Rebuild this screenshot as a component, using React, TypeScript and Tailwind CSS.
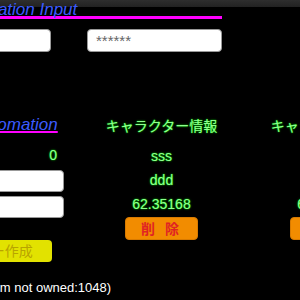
import React from 'react';

const glow = 'text-[#90ff90] [text-shadow:0_0_2px_#00b000,0_0_1px_#00e000]';

const characters = [
  { name: 'sss', sub: 'ddd', value: '62.35168' },
  { name: 'sss', sub: 'ddd', value: '62.35168' },
];

const CharacterCard: React.FC<{ name: string; sub: string; value: string }> = ({ name, sub, value }) => (
  <div className="w-[165px] shrink-0 flex flex-col items-center">
    <div className={`text-[14px] leading-[20px] whitespace-nowrap ${glow}`}>キャラクター情報</div>
    <div className={`mt-[8px] text-[14px] leading-[24px] ${glow}`}>{name}</div>
    <div className={`text-[14px] leading-[24px] ${glow}`}>{sub}</div>
    <div className={`text-[14px] leading-[24px] ${glow}`}>{value}</div>
    <button className="mt-[1px] w-[73px] h-[23px] rounded-[4px] bg-[#f28c00] border border-[#d87a00] text-[#e02424] text-[14px] font-bold tracking-[3px] leading-none">
      削 除
    </button>
  </div>
);

export default function App() {
  return (
    <div
      className="w-[300px] h-[300px] overflow-hidden bg-[linear-gradient(to_bottom,#2e2e2e_0px,#222222_7px,#000000_7px)] text-white"
      style={{ fontFamily: '"Liberation Sans", Arial, "Noto Sans CJK JP", sans-serif' }}
    >
      {/* input section */}
      <div className="-ml-[124px] w-[346px]">
        <h2 className="mt-[4px] text-[17px] leading-[12px] italic text-[#3b5bff] whitespace-nowrap border-b-[3px] border-[#ff00ff]">
          Character Infomation Input
        </h2>
        <div className="mt-[10px] flex justify-end gap-[36px]">
          <input className="w-[135px] h-[23px] rounded-[4px] bg-white border border-[#999] px-2 text-[15px] text-black" />
          <input
            className="w-[135px] h-[23px] rounded-[4px] bg-white border border-[#999] px-2 text-[15px] text-black placeholder:text-[#666]"
            placeholder="******"
          />
        </div>
      </div>

      {/* character list */}
      <div className="mt-[64px] flex">
        <div className="-ml-[101px] w-[180px] shrink-0 flex flex-col">
          <h2 className="text-[17px] leading-[17px] italic text-[#3b5bff] whitespace-nowrap underline decoration-[#ff00ff] decoration-[1.5px] underline-offset-[1px]">
            Character Infomation
          </h2>
          <div className={`mt-[12px] pr-[22px] text-right text-[14px] leading-[20px] ${glow}`}>0</div>
          <input className="mt-[5px] self-end mr-[15px] w-[150px] h-[22px] rounded-[4px] bg-white border border-[#999]" />
          <input className="mt-[4px] self-end mr-[15px] w-[150px] h-[22px] rounded-[4px] bg-white border border-[#999]" />
          <button className="mt-[22px] self-end mr-[27px] w-[150px] h-[22px] rounded-[4px] bg-[#e2e200] text-[#b8a400] text-[14px] leading-none whitespace-nowrap">
            キャラクター作成
          </button>
        </div>
        {characters.map((c, i) => (
          <CharacterCard key={i} {...c} />
        ))}
      </div>

      <div className="mt-[16px] -ml-[19px] text-[13px] leading-[20px] whitespace-nowrap">
        (Item not owned:1048)
      </div>
    </div>
  );
}
